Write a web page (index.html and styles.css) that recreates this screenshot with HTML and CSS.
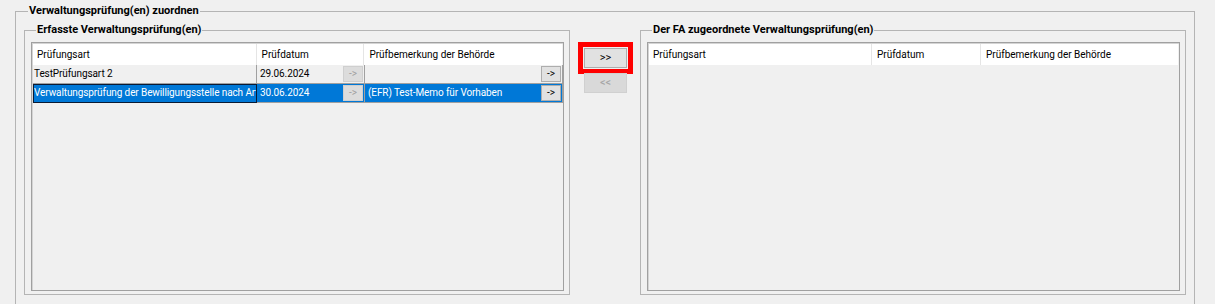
FILE: index.html
```html
<!DOCTYPE html>
<html lang="de">
<head>
    <meta charset="UTF-8">
    <title>Verwaltungsprüfung(en) zuordnen</title>
    <link rel="stylesheet" href="styles.css">
</head>
<body>
    <fieldset class="group outer">
        <legend>Verwaltungsprüfung(en) zuordnen</legend>

        <div class="columns">
            <!-- Left: captured checks -->
            <fieldset class="group inner">
                <legend>Erfasste Verwaltungsprüfung(en)</legend>
                <div class="grid">
                    <div class="row head">
                        <div class="cell c1">Prüfungsart</div>
                        <div class="cell c2">Prüfdatum</div>
                        <div class="cell c3">Prüfbemerkung der Behörde</div>
                    </div>
                    <div class="row">
                        <div class="cell c1">TestPrüfungsart 2</div>
                        <div class="cell c2"><span class="val">29.06.2024</span><button class="mini" disabled>-&gt;</button></div>
                        <div class="cell c3"><span class="val"></span><button class="mini">-&gt;</button></div>
                    </div>
                    <div class="row selected">
                        <div class="cell c1 focus">Verwaltungsprüfung der Bewilligungsstelle nach Art</div>
                        <div class="cell c2"><span class="val">30.06.2024</span><button class="mini" disabled>-&gt;</button></div>
                        <div class="cell c3"><span class="val">(EFR) Test-Memo für Vorhaben</span><button class="mini">-&gt;</button></div>
                    </div>
                </div>
            </fieldset>

            <!-- Move buttons -->
            <div class="transfer">
                <button class="move marked">&gt;&gt;</button>
                <button class="move" disabled>&lt;&lt;</button>
            </div>

            <!-- Right: assigned checks -->
            <fieldset class="group inner">
                <legend>Der FA zugeordnete Verwaltungsprüfung(en)</legend>
                <div class="grid right">
                    <div class="row head">
                        <div class="cell c1">Prüfungsart</div>
                        <div class="cell c2">Prüfdatum</div>
                        <div class="cell c3">Prüfbemerkung der Behörde</div>
                    </div>
                </div>
            </fieldset>
        </div>
    </fieldset>
</body>
</html>
```

FILE: styles.css
```css
/* General */
html, body {
    margin: 0;
    padding: 0;
    height: 304px;
    overflow: hidden;
}
body {
    background: #f0f0f0;
    font-family: Roboto, "Noto Sans", Arial, sans-serif;
    font-size: 10px;
    color: #000;
}

/* Group boxes */
.group {
    margin: 0;
    border: 1px solid #b4b4b4;
    box-sizing: border-box;
    min-width: 0;
}
.group > legend {
    font-weight: bold;
    font-size: 11px;
    line-height: 14px;
    padding: 0 1px;
    margin-left: 5px;
}
.outer {
    margin: 4px 0 0 15px;
    width: 1180px;
    height: 300px;
    padding: 5px 8px 0 8px;
    border-bottom: none;
}
.outer > legend {
    margin-left: 4px;
}
.columns {
    display: flex;
}
.inner {
    width: 546px;
    height: 272px;
    padding: 5px 5px 3px 6px;
    flex: none;
}

/* Grid */
.grid {
    height: 100%;
    border: 1px solid #a0a0a0;
    box-shadow: inset 1px 1px 0 #d4d4d4;
    box-sizing: border-box;
    padding: 1px 0 0 1px;
    overflow: hidden;
}
.row {
    display: flex;
    height: 19px;
}
.row.head {
    height: 21px;
    background: #fff;
    margin-right: 1px;
}
.cell {
    box-sizing: border-box;
    border-right: 1px solid #a0a0a0;
    border-bottom: 1px solid #a0a0a0;
    padding: 0 1px;
    line-height: 18px;
    white-space: nowrap;
    overflow: hidden;
    display: flex;
    align-items: center;
    letter-spacing: -0.1px;
}
.c1 { width: 224px; }
.c2 { width: 108px; }
.c3 { width: 198px; }
.right .c1 { width: 223px; }
.right .c2 { width: 109px; }
.right .c3 { width: 197px; }

.head .cell {
    border-bottom: none;
    border-right: 1px solid #e5e5e5;
    padding-left: 4px;
    line-height: 21px;
    letter-spacing: 0;
}
.head .c2, .head .c3 { padding-left: 5px; }
.head .c3 { border-right: none; }

.val {
    flex: 1;
    overflow: hidden;
    padding-left: 2px;
}

.selected .cell {
    background: #0078d7;
    color: #fff;
}
.selected .focus {
    outline: 1px solid #0a1a33;
    outline-offset: -1px;
    border-right-color: #0a1a33;
}

/* Small buttons inside cells */
.mini {
    flex: none;
    width: 20px;
    height: 16px;
    padding: 0;
    font: inherit;
    font-size: 10px;
    line-height: 14px;
    background: #e1e1e1;
    border: 1px solid #adadad;
    color: #000;
}
.mini:disabled {
    background: #dcdcdc;
    border-color: #cfcfcf;
    color: #a0a0a0;
}

/* Transfer buttons */
.transfer {
    width: 70px;
    flex: none;
    display: flex;
    flex-direction: column;
    gap: 5px;
    padding: 25px 0 0 14px;
    box-sizing: border-box;
}
.move {
    width: 43px;
    height: 20px;
    padding: 0;
    font: inherit;
    font-size: 11px;
    line-height: 18px;
    background: #e1e1e1;
    border: 1px solid #adadad;
    color: #000;
}
.move:disabled {
    background: #d9d9d9;
    border-color: #d0d0d0;
    color: #a6a6a6;
}
.marked {
    outline: 5px solid #ff0000;
    outline-offset: 1px;
}
```
